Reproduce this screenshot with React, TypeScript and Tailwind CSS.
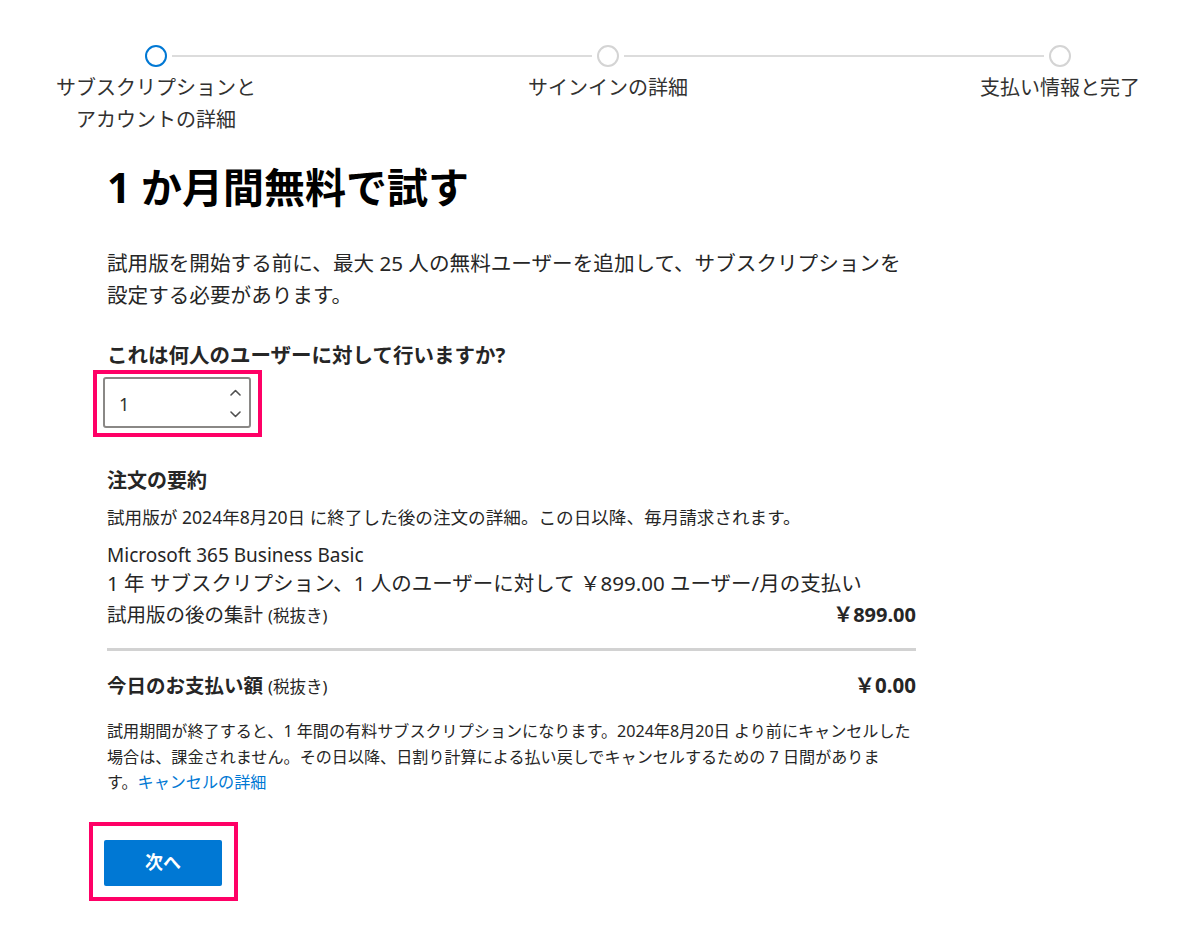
import React from "react";

const FONT = '"Noto Sans", "Noto Sans CJK JP", sans-serif';

function Circle({ active }: { active?: boolean }) {
  return (
    <div
      className={
        active
          ? "w-[22px] h-[22px] rounded-full border-[2.5px] border-[#0078d4] bg-white shrink-0"
          : "w-[22px] h-[22px] rounded-full border-[2.5px] border-[#d4d4d4] bg-white shrink-0"
      }
    />
  );
}

function Line() {
  return <div className="w-[420px] h-[2px] bg-[#dcdcdc] mx-[5px] shrink-0" />;
}

function Chevron({ up }: { up?: boolean }) {
  return (
    <svg width="11" height="7" viewBox="0 0 11 7" fill="none">
      {up ? (
        <path d="M1 6 L5.5 1.5 L10 6" stroke="#505050" strokeWidth="1.6" strokeLinecap="round" strokeLinejoin="round" />
      ) : (
        <path d="M1 1 L5.5 5.5 L10 1" stroke="#505050" strokeWidth="1.6" strokeLinecap="round" strokeLinejoin="round" />
      )}
    </svg>
  );
}

export default function App() {
  return (
    <div
      className="w-[1200px] h-[932px] bg-white overflow-hidden text-[#262626]"
      style={{ fontFamily: FONT }}
    >
      {/* Stepper */}
      <div className="pt-[45px] flex items-center ml-[145px]">
        <Circle active />
        <Line />
        <Circle />
        <Line />
        <Circle />
      </div>
      <div className="mt-[5px] ml-[6px] flex gap-[152px] text-[20px] leading-[32px] text-[#323130]">
        <div className="w-[300px] shrink-0 text-center">
          サブスクリプションと
          <br />
          アカウントの詳細
        </div>
        <div className="w-[300px] shrink-0 text-center">サインインの詳細</div>
        <div className="w-[300px] shrink-0 text-center">支払い情報と完了</div>
      </div>

      {/* Content */}
      <div className="ml-[107px] w-[809px]">
        <h1 className="mt-[27px] text-[41px] leading-[48px] font-bold text-black">
          1 か月間無料で試す
        </h1>
        <p className="mt-[36px] text-[20.6px] leading-[32px] whitespace-nowrap">
          試用版を開始する前に、最大 25 人の無料ユーザーを追加して、サブスクリプションを
          <br />
          設定する必要があります。
        </p>
        <div className="mt-[30px] text-[20.5px] leading-[28px] font-bold">
          これは何人のユーザーに対して行いますか?
        </div>

        <div className="mt-[1px] -ml-[14px] w-fit border-[4px] border-[#ff0066] pl-[6px] pr-[7px] pt-[3px] pb-[5px]">
          <div className="w-[148px] h-[51px] border-2 border-[#8a8886] rounded-[3px] flex items-center justify-between">
            <span className="pl-[14px] pt-[3px] text-[18px] text-[#323130]">1</span>
            <div className="flex flex-col items-center gap-[15px] pr-[8px] pt-[2px]">
              <Chevron up />
              <Chevron />
            </div>
          </div>
        </div>

        <div className="mt-[30px] text-[20px] leading-[28px] font-bold">注文の要約</div>
        <div className="mt-[9px] text-[17.6px] leading-[26px] whitespace-nowrap">
          試用版が 2024年8月20日 に終了した後の注文の詳細。この日以降、毎月請求されます。
        </div>
        <div className="mt-[12px] text-[19px] leading-[27px]">Microsoft 365 Business Basic</div>
        <div className="text-[20.5px] leading-[28px] whitespace-nowrap">
          1 年 サブスクリプション、1 人のユーザーに対して ￥899.00 ユーザー/月の支払い
        </div>
        <div className="mt-[3px] flex justify-between items-baseline leading-[30px]">
          <div className="text-[19.5px]">
            試用版の後の集計 <span className="text-[16.5px]">(税抜き)</span>
          </div>
          <div className="text-[20px] font-bold">￥899.00</div>
        </div>
        <div className="mt-[17px] h-[3px] bg-[#d2d2d2]" />
        <div className="mt-[19px] flex justify-between items-baseline leading-[30px]">
          <div className="text-[19.5px] font-bold">
            今日のお支払い額 <span className="text-[16.5px] font-normal">(税抜き)</span>
          </div>
          <div className="text-[20.5px] font-bold">￥0.00</div>
        </div>
        <p className="mt-[17px] text-[16.1px] leading-[25.5px] whitespace-nowrap">
          試用期間が終了すると、1 年間の有料サブスクリプションになります。2024年8月20日 より前にキャンセルした
          <br />
          場合は、課金されません。その日以降、日割り計算による払い戻しでキャンセルするための 7 日間がありま
          <br />
          す。<a className="text-[#0078d4]">キャンセルの詳細</a>
        </p>

        <div className="mt-[26px] -ml-[18px] w-fit border-[4px] border-[#ff0066] pl-[11px] pr-[12px] pt-[14px] pb-[11px]">
          <button className="w-[118px] h-[46px] bg-[#0078d4] rounded-[2px] text-white font-bold text-[18px] flex items-center justify-center">
            次へ
          </button>
        </div>
      </div>
    </div>
  );
}
